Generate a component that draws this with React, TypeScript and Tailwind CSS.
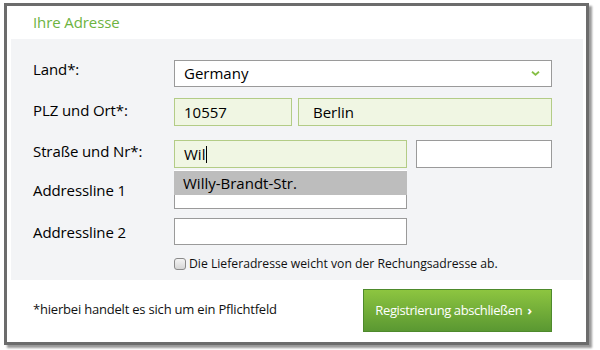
import React from "react";

const font = { fontFamily: '"Open Sans", "Noto Sans", sans-serif' };

function Label({ children }: { children: React.ReactNode }) {
  return (
    <div className="w-[141px] shrink-0 text-[15px] text-[#000] leading-none tracking-[-0.1px]">{children}</div>
  );
}

export default function App() {
  return (
    <div className="w-[600px] h-[350px] bg-white pt-[3px] pl-[4px]" style={font}>
      <div className="w-[585px] h-[342px] border-[3px] border-[#6c6c6c] bg-white shadow-[3px_3px_2px_rgba(0,0,0,0.4)] flex flex-col">
        <div className="h-[33px] pl-[26px] flex items-center text-[15px] text-[#6db33f] tracking-[-0.1px]">
          Ihre Adresse
        </div>
        <div className="ml-[4px] mr-[3px] h-[241px] bg-[#f3f4f6] pl-[22px] pt-[21px] relative">
          {/* Land */}
          <div className="flex items-center h-[27px]">
            <div className="-mt-[8px]"><Label>Land*:</Label></div>
            <div className="w-[378px] h-[27px] bg-white border border-[#9a9a9a] flex items-center justify-between pl-[9px] pr-[11px] text-[15px] text-[#000]">
              <span>Germany</span>
              <svg width="9" height="5" viewBox="0 0 9 5">
                <path d="M1 0.8 L4.5 3.8 L8 0.8" fill="none" stroke="#86bf45" strokeWidth="1.8" />
              </svg>
            </div>
          </div>
          {/* PLZ */}
          <div className="flex items-center h-[28px] mt-[11px]">
            <div className="-mt-[4px]"><Label>PLZ und Ort*:</Label></div>
            <div className="w-[118px] h-[28px] bg-[#f0f6e3] border border-[#b3cc86] flex items-center pl-[9px] text-[15px] text-[#000]">10557</div>
            <div className="w-[254px] h-[28px] ml-[6px] bg-[#f0f6e3] border border-[#b3cc86] flex items-center pl-[14px] text-[15px] text-[#000]">Berlin</div>
          </div>
          {/* Strasse */}
          <div className="flex items-center h-[28px] mt-[14px]">
            <div className="-mt-[5px]"><Label>Straße und Nr*:</Label></div>
            <div className="w-[233px] h-[28px] bg-[#f0f6e3] border border-[#b3cc86] flex items-center pl-[9px] text-[15px] text-[#000]">
              Wil<span className="inline-block w-[1px] h-[17px] bg-[#000] ml-[1px]"></span>
            </div>
            <div className="w-[136px] h-[28px] ml-[9px] bg-white border border-[#9a9a9a]"></div>
          </div>
          {/* Addressline 1 */}
          <div className="flex items-center h-[27px] mt-[14px] relative">
            <div className="-mt-[10px]"><Label>Addressline 1</Label></div>
            <div className="w-[233px] h-[27px] bg-white border border-[#9a9a9a]"></div>
            <div className="absolute left-[141px] top-[-12px] w-[233px] h-[25px] bg-[#bdbdbd] border-t border-white flex items-center pl-[9px] text-[15px] text-[#000]">
              Willy-Brandt-Str.
            </div>
          </div>
          {/* Addressline 2 */}
          <div className="flex items-center h-[27px] mt-[9px]">
            <div className="mt-[2px]"><Label>Addressline 2</Label></div>
            <div className="w-[233px] h-[27px] bg-white border border-[#9a9a9a]"></div>
          </div>
          {/* checkbox */}
          <div className="flex items-center mt-[10px] pl-[141px]">
            <div className="w-[12px] h-[12px] rounded-[3px] border border-[#8a8a8a] bg-gradient-to-b from-[#f4f4f4] to-[#d6d6d6]"></div>
            <span className="ml-[3px] text-[12.2px] text-[#111]">Die Lieferadresse weicht von der Rechungsadresse ab.</span>
          </div>
        </div>
        <div className="flex items-start justify-between pl-[26px] pr-[34px] pt-[9px]">
          <span className="mt-[11px] text-[13px] text-[#111] tracking-[-0.2px]">*hierbei handelt es sich um ein Pflichtfeld</span>
          <button className="w-[189px] h-[43px] border border-[#4e8a2c] bg-gradient-to-b from-[#8dc540] to-[#5a9832] text-white text-[13px] flex items-center justify-center tracking-[-0.4px] pr-[8px]">
            Registrierung abschließen <span className="ml-[5px] font-bold">›</span>
          </button>
        </div>
      </div>
    </div>
  );
}
